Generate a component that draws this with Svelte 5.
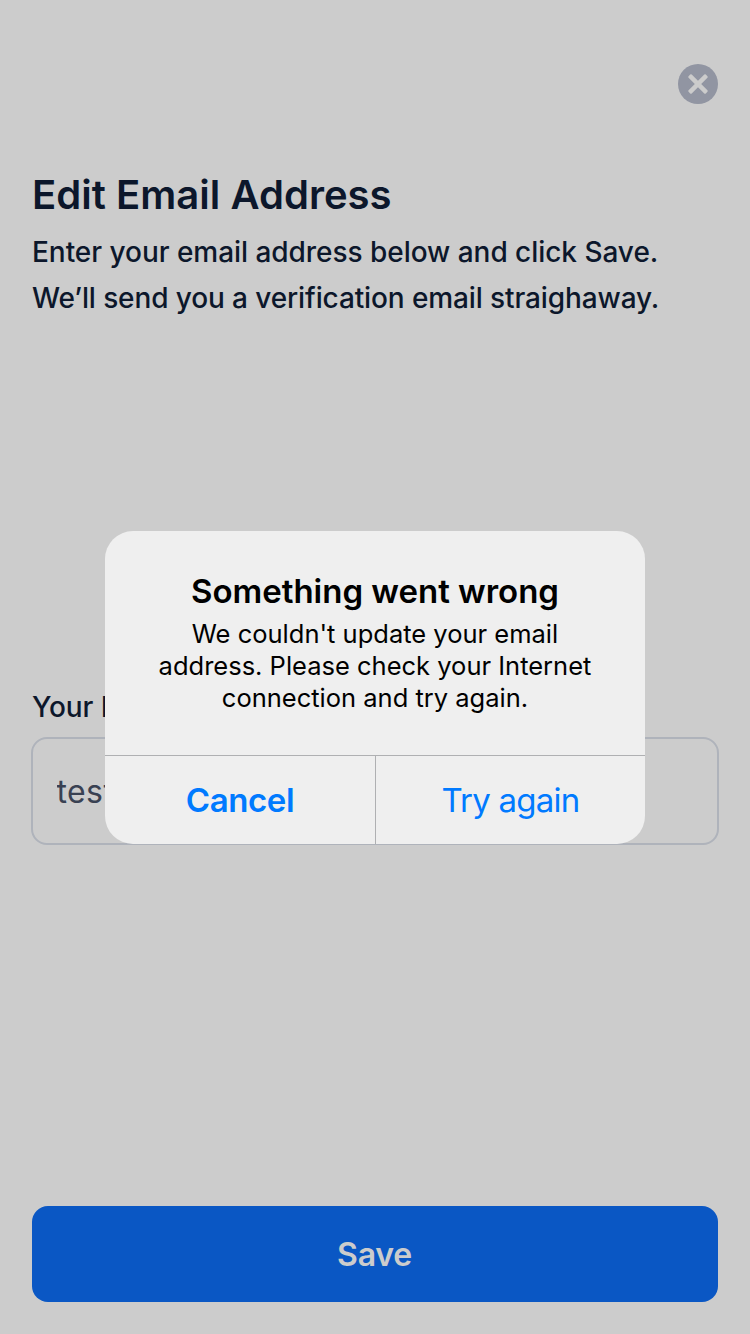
<script>
  let email = $state('test');
</script>

<main class="screen">
  <header>
    <button class="close" aria-label="Close">
      <svg width="40" height="40" viewBox="0 0 40 40">
        <circle cx="20" cy="20" r="20" fill="#9195a2" />
        <g fill="#cccccc">
          <rect x="7.8" y="17.75" width="24.4" height="4.5" rx="1.1" transform="rotate(45 20 20)" />
          <rect x="7.8" y="17.75" width="24.4" height="4.5" rx="1.1" transform="rotate(-45 20 20)" />
        </g>
      </svg>
    </button>
  </header>
  <section class="intro">
    <h1>Edit Email Address</h1>
    <p><span class="first">Enter your email address below and click Save.</span><br /><span class="second">We’ll send you a verification email straighaway.</span></p>
  </section>
  <section class="field">
    <label for="email">Your Email</label>
    <input id="email" bind:value={email} />
  </section>
  <button class="save">Save</button>
</main>

<div class="overlay">
  <div class="alert" role="alertdialog" aria-labelledby="title">
    <div class="body">
      <h2 id="title">Something went wrong</h2>
      <p>We couldn't update your email<br />address. Please check your Internet<br />connection and try again.</p>
    </div>
    <div class="actions">
      <button class="cancel">Cancel</button>
      <button class="retry">Try again</button>
    </div>
  </div>
</div>

<style>
  :global(body) { background: #cccccc; }
  * { box-sizing: border-box; margin: 0; }
  button, input { font: inherit; border: 0; background: none; padding: 0; }
  .screen { font-family: Inter, sans-serif; color: #0c172b; height: 1334px; padding: 64px 32px 32px; display: flex; flex-direction: column; }
  header { display: flex; justify-content: flex-end; height: 40px; }
  .close, .close svg { display: block; width: 40px; height: 40px; }
  .intro { margin-top: 66px; height: 508px; white-space: nowrap; }
  h1 { font-size: 40px; line-height: 50px; font-weight: 600; letter-spacing: 0.03px; }
  .intro p { margin-top: 9px; font-size: 28px; line-height: 46px; font-weight: 500; }
  .first { letter-spacing: -0.04px; }
  .second { letter-spacing: -0.11px; }
  label { display: block; font-size: 28px; line-height: 34px; height: 47px; font-weight: 500; letter-spacing: -0.07px; margin-top: 12px; }
  input { display: block; width: 688px; height: 108px; margin-left: -1px; border: 2px solid #afb3bb; border-radius: 16px; padding: 0 23.5px; font-size: 32px; color: #394152; letter-spacing: 0.4px; }
  .save { margin-top: auto; height: 96px; flex: none; border-radius: 16px; background: #0a57c4; color: #cccccc; font-size: 32px; font-weight: 600; letter-spacing: -0.2px; padding-right: 1px; }
  .overlay { position: absolute; inset: 0; height: 1334px; padding-top: 531px; font-family: Inter, sans-serif; }
  .alert { width: 540px; height: 313px; margin: 0 auto; border-radius: 28px; overflow: hidden; background: #efefef; color: #000; text-align: center; }
  .body { height: 224px; padding-top: 40px; white-space: nowrap; }
  h2 { font-size: 33px; line-height: 40px; font-weight: 600; letter-spacing: -0.02px; }
  .alert p { font-size: 25.5px; line-height: 32px; margin-top: 7px; }
  .actions { display: grid; grid-template-columns: 270px 270px; height: 89px; border-top: 1px solid #afb0b2; }
  .actions button { color: #007aff; font-size: 33px; padding-bottom: 1px; }
  .actions .cancel { font-weight: 600; letter-spacing: -0.4px; }
  .actions .retry { border-left: 1px solid #afb0b2; letter-spacing: -0.75px; }
</style>
